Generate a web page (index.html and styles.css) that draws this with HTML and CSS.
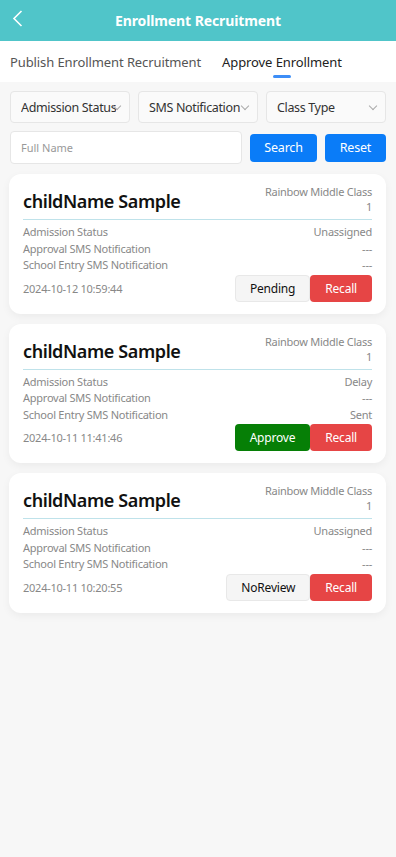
FILE: index.html
```html
<!DOCTYPE html>
<html lang="en">
<head>
  <meta charset="UTF-8" />
  <meta name="viewport" content="width=device-width, initial-scale=1.0"/>
  <title>Enrollment Recruitment</title>
  <link rel="stylesheet" href="styles.css">
</head>
<body>
  <header class="topbar">
    <span class="back">
      <svg width="11" height="17" viewBox="0 0 11 17"><path d="M9.5 1 L2 8.5 L9.5 16" fill="none" stroke="#fff" stroke-width="1.6"/></svg>
    </span>
    <h1>Enrollment Recruitment</h1>
  </header>

  <nav class="tabs">
    <span class="tab">Publish Enrollment Recruitment</span>
    <span class="tab active">Approve Enrollment</span>
  </nav>

  <div class="filters">
    <div class="select"><span class="select-text">Admission Status</span><span class="arrow"></span></div>
    <div class="select"><span class="select-text">SMS Notification</span><span class="arrow"></span></div>
    <div class="select"><span class="select-text">Class Type</span><span class="arrow"></span></div>
  </div>

  <div class="search-row">
    <input type="text" class="name-input" placeholder="Full Name" />
    <button class="btn-blue search">Search</button>
    <button class="btn-blue reset">Reset</button>
  </div>

  <div class="list">
    <div class="card">
      <div class="card-head">
        <div class="child">childName Sample</div>
        <div class="class-name">Rainbow Middle Class 1</div>
      </div>
      <div class="row"><span>Admission Status</span><span>Unassigned</span></div>
      <div class="row"><span>Approval SMS Notification</span><span>---</span></div>
      <div class="row"><span>School Entry SMS Notification</span><span>---</span></div>
      <div class="card-foot">
        <span class="date">2024-10-12 10:59:44</span>
        <div class="actions"><button class="btn grey">Pending</button><button class="btn red">Recall</button></div>
      </div>
    </div>

    <div class="card">
      <div class="card-head">
        <div class="child">childName Sample</div>
        <div class="class-name">Rainbow Middle Class 1</div>
      </div>
      <div class="row"><span>Admission Status</span><span>Delay</span></div>
      <div class="row"><span>Approval SMS Notification</span><span>---</span></div>
      <div class="row"><span>School Entry SMS Notification</span><span>Sent</span></div>
      <div class="card-foot">
        <span class="date">2024-10-11 11:41:46</span>
        <div class="actions"><button class="btn green">Approve</button><button class="btn red">Recall</button></div>
      </div>
    </div>

    <div class="card">
      <div class="card-head">
        <div class="child">childName Sample</div>
        <div class="class-name">Rainbow Middle Class 1</div>
      </div>
      <div class="row"><span>Admission Status</span><span>Unassigned</span></div>
      <div class="row"><span>Approval SMS Notification</span><span>---</span></div>
      <div class="row"><span>School Entry SMS Notification</span><span>---</span></div>
      <div class="card-foot">
        <span class="date">2024-10-11 10:20:55</span>
        <div class="actions"><button class="btn grey">NoReview</button><button class="btn red">Recall</button></div>
      </div>
    </div>
  </div>
</body>
</html>
```

FILE: styles.css
```css
body { margin: 0; background: #f7f7f7; font-family: "Noto Sans", Arial, sans-serif; color: #333; min-height: 857px; }
button { font-family: inherit; cursor: pointer; }

.topbar { height: 41px; background: #50c5c9; display: flex; align-items: center; justify-content: center; position: relative; }
.topbar h1 { margin: 0; font-size: 14px; font-weight: 700; color: #fff; letter-spacing: -0.1px; }
.back { position: absolute; left: 12px; top: 10px; display: flex; }

.tabs { height: 41px; background: #fff; display: flex; align-items: center; gap: 21px; padding: 0 10px; }
.tab { font-size: 13px; color: #555; position: relative; line-height: 20px; letter-spacing: -0.1px; }
.tab.active { color: #222; }
.tab.active::after { content: ""; position: absolute; left: 50%; margin-left: -9px; bottom: -6px; width: 18px; height: 3px; border-radius: 2px; background: #3d8ef7; }

.filters { display: flex; gap: 8px; padding: 9px 10px 0; }
.select { flex: 1; height: 30px; border: 1px solid #e6e6e6; border-radius: 4px; background: #fafafa; display: flex; align-items: center; padding: 0 4px 0 10px; position: relative; min-width: 0; }
.select-text { font-size: 12.5px; color: #333; white-space: nowrap; overflow: hidden; text-overflow: ellipsis; letter-spacing: -0.35px; }
.arrow { position: absolute; right: 9px; top: 11px; width: 5px; height: 5px; border-right: 1px solid #aaa; border-bottom: 1px solid #aaa; transform: rotate(45deg); }

.search-row { display: flex; align-items: center; gap: 8px; padding: 8px 10px 0; }
.name-input { width: 232px; height: 33px; box-sizing: border-box; border: 1px solid #e6e6e6; border-radius: 4px; background: #fff; padding: 0 10px; font-size: 11px; font-family: inherit; outline: none; }
.name-input::placeholder { color: #999; }
.btn-blue { height: 28px; border: none; border-radius: 4px; background: #0a7cf8; color: #fff; font-size: 12.5px; padding: 0; letter-spacing: -0.2px; }
.btn-blue.search { width: 67px; }
.btn-blue.reset { width: 61px; }

.list { display: flex; flex-direction: column; gap: 10px; padding: 10px 10px 0 9px; }
.card { background: #fff; border-radius: 12px; padding: 10px 14px 12px; box-shadow: 0 3px 8px rgba(0, 0, 0, 0.05); }
.card-head { display: flex; justify-content: space-between; align-items: flex-end; border-bottom: 1px solid #bfe2ea; padding-bottom: 5px; margin-bottom: 4px; }
.child { font-size: 18px; font-weight: 600; color: #111; line-height: 26px; letter-spacing: -0.4px; }
.class-name { width: 110px; text-align: right; font-size: 11px; color: #888; line-height: 15px; letter-spacing: -0.25px; }
.row { display: flex; justify-content: space-between; font-size: 11px; color: #888; line-height: 16.5px; letter-spacing: -0.25px; }
.card-foot { display: flex; justify-content: space-between; align-items: center; margin-top: 1px; }
.date { font-size: 11px; color: #888; letter-spacing: -0.25px; }
.actions { display: flex; }
.btn { height: 27px; border: 1px solid transparent; border-radius: 4px; font-size: 12px; padding: 0 14px; letter-spacing: -0.2px; }
.btn.grey { background: #f5f5f5; border-color: #e8e8e8; color: #111; }
.btn.red { background: #e64545; color: #fff; }
.btn.green { background: #067f06; color: #fff; }
```
